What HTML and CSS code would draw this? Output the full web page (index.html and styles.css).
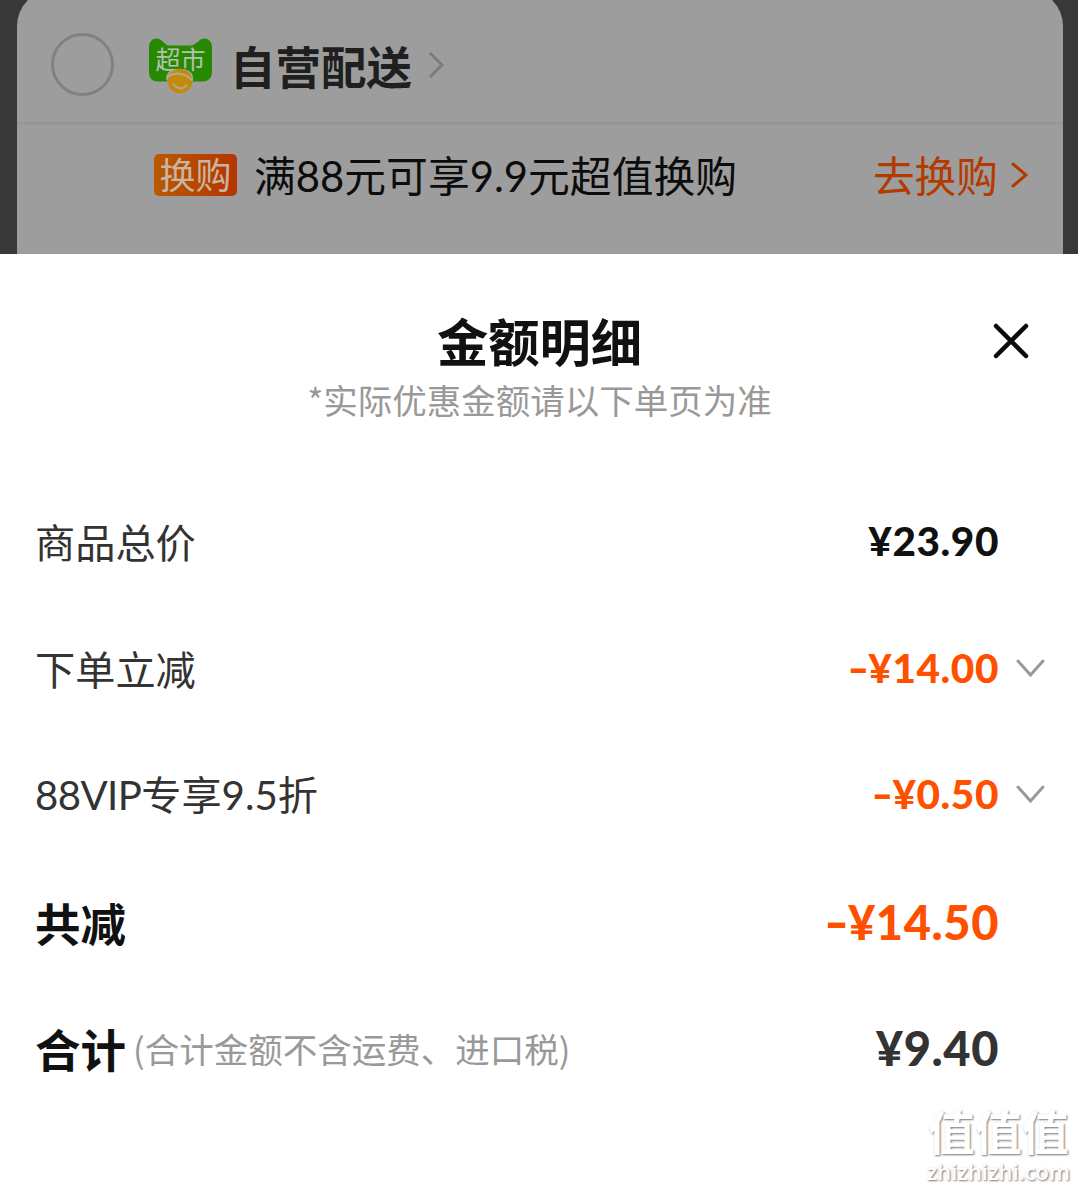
FILE: index.html
```
<!DOCTYPE html>
<html lang="zh-CN">
<head>
    <meta charset="UTF-8">
    <meta name="viewport" content="width=device-width, initial-scale=1.0">
    <title>金额明细</title>
    <link rel="stylesheet" href="styles.css">
</head>
<body>
    <div class="cart">
        <div class="cart-card">
            <div class="shop">
                <span class="checkbox"></span>
                <svg class="shop-logo" width="64" height="56" viewBox="0 0 64 56">
                    <path d="M1 9C1 1 9-2 14 3L18 6.5Q19 7.5 21 7.5H43Q45 7.5 46 6.5L51 3C56-2 64 1 64 9V34Q64 43.5 54 43.5H10Q1 43.5 1 34Z" fill="#278902"/>
                    <text class="logo-text" x="32.5" y="31" text-anchor="middle">超市</text>
                    <path d="M18 41Q18 32 28 31H36Q46 33 45 42Q43 44 43 45H20Q20 43 18 41Z" fill="#a5a89b"/>
                    <circle cx="32" cy="43" r="12.3" fill="#c48a0c"/>
                    <path d="M20 38.5Q32 31 44 42M25.5 46.500Q33 54 38.5 47" fill="none" stroke="#b3aa94" stroke-width="2" stroke-linecap="round"/>
                </svg>
                <span class="shop-name">自营配送</span>
                <svg class="shop-arrow" width="16" height="28" viewBox="0 0 16 28">
                    <path d="M2 2L14 14L2 26" fill="none" stroke="#7b7b7b" stroke-width="3"/>
                </svg>
            </div>
            <div class="promo">
                <span class="promo-tag">换购</span>
                <span class="promo-text">满<span class="num">88</span>元可享<span class="num">9.9</span>元超值换购</span>
                <span class="promo-link">去换购</span>
                <svg class="promo-arrow" width="18" height="28" viewBox="0 0 18 28">
                    <path d="M2 3L15 14L2 25" fill="none" stroke="#b33b02" stroke-width="3" stroke-linecap="round"/>
                </svg>
            </div>
        </div>
    </div>

    <div class="sheet">
        <div class="sheet-header">
            <h1 class="title">金额明细</h1>
            <p class="subtitle">*实际优惠金额请以下单页为准</p>
            <svg class="close" width="40" height="40" viewBox="0 0 40 40">
                <path d="M5 5L35 35M35 5L5 35" fill="none" stroke="#0b0b0b" stroke-width="4.5" stroke-linecap="round"/>
            </svg>
        </div>

        <div class="row">
            <span class="label">商品总价</span>
            <span class="price">¥23.90</span>
        </div>
        <div class="row">
            <span class="label">下单立减</span>
            <span class="price discount"><span class="minus">-</span>¥14.00</span>
            <svg class="expand" width="30" height="20" viewBox="0 0 30 20">
                <path d="M3 3L15.5 17L28 3" fill="none" stroke="#999" stroke-width="3" stroke-linecap="round"/>
            </svg>
        </div>
        <div class="row">
            <span class="label"><span class="num vip">88VIP</span>专享<span class="num">9.5</span>折</span>
            <span class="price discount"><span class="minus">-</span>¥0.50</span>
            <svg class="expand" width="30" height="20" viewBox="0 0 30 20">
                <path d="M3 3L15.5 17L28 3" fill="none" stroke="#999" stroke-width="3" stroke-linecap="round"/>
            </svg>
        </div>
        <div class="row large">
            <span class="label">共减</span>
            <span class="price discount"><span class="minus">-</span>¥14.50</span>
        </div>
        <div class="row large">
            <span class="label">合计</span>
            <span class="note">(合计金额不含运费、进口税)</span>
            <span class="price total">¥9.40</span>
        </div>
    </div>

    <div class="watermark">
        <div class="watermark-name">值值值</div>
        <div class="watermark-url">zhizhizhi.com</div>
    </div>
</body>
</html>
```
FILE: styles.css
```
* {
    box-sizing: border-box;
}
body {
    position: relative;
    width: 1078px;
    height: 1190px;
    margin: 0;
    overflow: hidden;
    background: #fff;
    color: #333;
    font-family: "Noto Sans CJK SC", sans-serif;
    white-space: nowrap;
}
svg {
    display: block;
    flex-shrink: 0;
}
.num {
    font-family: Lato, "Noto Sans CJK SC", sans-serif;
}
.vip {
    letter-spacing: -0.6px;
}

/* dimmed cart behind the sheet */
.cart {
    height: 254px;
    padding: 0 15px 0 17px;
    background: #383838;
    overflow: hidden;
}
.cart-card {
    height: 264px;
    margin-top: -10px;
    padding-top: 10px;
    border-radius: 36px 36px 0 0;
    background: #9d9d9d;
}
.shop {
    display: flex;
    align-items: center;
    height: 125px;
    padding-left: 34px;
    border-bottom: 3px solid #969696;
}
.checkbox {
    width: 63px;
    height: 63px;
    margin-top: 6px;
    border: 3px solid #818181;
    border-radius: 50%;
}
.shop-logo {
    margin: 9px 0 0 34px;
}
.logo-text {
    font-size: 25px;
    fill: #b5c2ae;
}
.shop-name {
    margin: 7px 0 0 18px;
    color: #1f1f1f;
    font-size: 45.5px;
    line-height: 60px;
    font-weight: 700;
}
.shop-arrow {
    margin: 7px 0 0 16px;
}
.promo {
    display: flex;
    align-items: center;
    height: 99px;
    padding: 0 34px 0 137px;
}
.promo-tag {
    width: 83px;
    height: 42px;
    border-radius: 5px;
    background: linear-gradient(90deg, #b85a00, #b63400);
    color: #c9b4a4;
    font-size: 36px;
    line-height: 39px;
    text-align: center;
}
.promo-text {
    margin-left: 17px;
    color: #0c0c0c;
    font-size: 41.8px;
    line-height: 60px;
}
.promo-link {
    margin: -2px 0 0 auto;
    color: #b33b02;
    font-size: 41.7px;
    line-height: 60px;
}
.promo-arrow {
    margin: 1px 0 0 13px;
}

/* amount details */
.sheet {
    padding: 55px 34px 0 35px;
    background: #fff;
}
.sheet-header {
    position: relative;
    height: 169px;
    text-align: center;
}
.title {
    margin: 0;
    color: #111;
    font-size: 51.3px;
    line-height: 62px;
    font-weight: 700;
}
.subtitle {
    margin: 4px 0 0;
    color: #999;
    font-size: 34.5px;
    line-height: 48px;
}
.close {
    position: absolute;
    top: 12px;
    right: 13px;
}
.row {
    display: flex;
    align-items: center;
    height: 126.5px;
}
.label {
    font-size: 40.2px;
    line-height: 60px;
}
.price {
    width: 240px;
    margin-left: auto;
    margin-right: 45px;
    color: #111;
    font-family: Lato, sans-serif;
    font-size: 40.5px;
    line-height: 60px;
    font-weight: 900;
    letter-spacing: 0.6px;
    text-align: right;
}
.price.discount {
    color: #ff5000;
}
.minus {
    display: inline-block;
    margin-right: 2px;
    transform: scaleX(1.4);
}
.expand {
    margin: 0 -1px 0 -29px;
}
.row.large {
    padding-top: 2px;
}
.row.large .label {
    color: #111;
    font-size: 45.5px;
    font-weight: 700;
}
.row.large .price {
    font-size: 47px;
}
.row.large .price.total {
    color: #333;
}
.note {
    margin-left: 7px;
    color: #999;
    font-size: 34.5px;
}

/* site mark in the corner */
.watermark {
    position: absolute;
    right: 8px;
    bottom: 6px;
    color: #fff;
    text-align: center;
    text-shadow: 1px 1px 2px #777;
}
.watermark-name {
    margin-bottom: 4px;
    font-size: 47px;
    line-height: 50px;
    font-weight: 700;
}
.watermark-url {
    font-family: "Open Sans", sans-serif;
    font-size: 22px;
    line-height: 25px;
    font-weight: 600;
}
```
